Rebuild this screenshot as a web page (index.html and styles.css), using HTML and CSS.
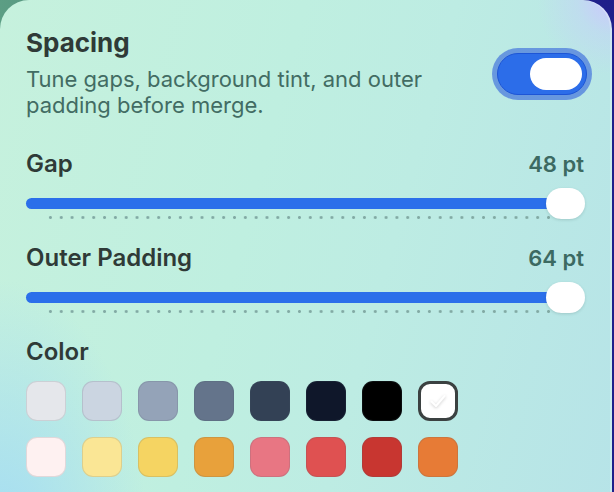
FILE: index.html
```html
<!DOCTYPE html>
<html lang="en">
<head>
<meta charset="utf-8">
<title>Spacing</title>
<link rel="stylesheet" href="styles.css">
</head>
<body>
<div class="panel">
  <header class="head">
    <div class="head-text">
      <h1 class="title">Spacing</h1>
      <p class="desc">Tune gaps, background tint, and outer padding before merge.</p>
    </div>
    <div class="toggle" role="switch" aria-checked="true"><span class="toggle-knob"></span></div>
  </header>

  <section class="field field-gap">
    <div class="field-row"><span class="label">Gap</span><span class="value">48 pt</span></div>
    <div class="slider">
      <div class="slider-track"></div>
      <div class="slider-dots"></div>
      <span class="slider-knob"></span>
    </div>
  </section>

  <section class="field">
    <div class="field-row"><span class="label">Outer Padding</span><span class="value">64 pt</span></div>
    <div class="slider">
      <div class="slider-track"></div>
      <div class="slider-dots"></div>
      <span class="slider-knob"></span>
    </div>
  </section>

  <section class="field">
    <div class="field-row"><span class="label">Color</span></div>
    <div class="swatches">
      <span class="sw c1"></span>
      <span class="sw c2"></span>
      <span class="sw c3"></span>
      <span class="sw c4"></span>
      <span class="sw c5"></span>
      <span class="sw c6"></span>
      <span class="sw c7"></span>
      <span class="sw c8 selected"><svg class="check" viewBox="0 0 24 24" width="24" height="24"><path d="M5.5 12.5l4.5 4.5 8.5-10" fill="none" stroke="#ffffff" stroke-width="2" stroke-linecap="round" stroke-linejoin="round"/></svg></span>
      <span class="sw d1"></span>
      <span class="sw d2"></span>
      <span class="sw d3"></span>
      <span class="sw d4"></span>
      <span class="sw d5"></span>
      <span class="sw d6"></span>
      <span class="sw d7"></span>
      <span class="sw d8"></span>
    </div>
  </section>
</div>
</body>
</html>
```
FILE: styles.css
```css
* { box-sizing: border-box; }
html, body { margin: 0; padding: 0; }
body {
  width: 614px;
  height: 492px;
  overflow: hidden;
  background: linear-gradient(90deg, #5c9e84 0%, #4f8a7c 20%, #22228b 80%, #1f1f8a 100%);
  font-family: "Inter", "Noto Sans", sans-serif;
}
.panel {
  width: 612px;
  min-height: 560px;
  border-radius: 29px 29px 0 0;
  padding: 27px 27px 0 26px;
  background:
    radial-gradient(circle at 100% 0%, rgba(205,198,255,0.95) 0px, rgba(200,200,255,0.35) 35px, rgba(190,230,235,0) 75px),
    radial-gradient(ellipse 150px 280px at 0% 100%, rgba(160,218,246,0.95), rgba(170,225,240,0) 100%),
    linear-gradient(105deg, #c6f1dd 0%, #bfefe0 40%, #bdece3 60%, #b6e3e8 100%);
  box-shadow: inset -2px 0 0 rgba(255,255,255,0.25);
}
.head {
  display: flex;
  align-items: center;
  justify-content: space-between;
}
.title {
  margin: 0;
  font-size: 26px;
  line-height: 32px;
  font-weight: 700;
  color: #2f3a37;
}
.desc {
  margin: 7px 0 0;
  width: 440px;
  font-size: 22px;
  line-height: 26px;
  font-weight: 400;
  color: #426c63;
}
.toggle {
  position: relative;
  width: 90px;
  height: 42px;
  margin-right: -2px;
  margin-top: 2px;
  border-radius: 21px;
  background: #2c6de9;
  border: 1px solid #1d55d6;
  box-shadow: 0 0 0 5px rgba(48,96,218,0.6);
}
.toggle-knob {
  position: absolute;
  right: 4px;
  top: 4px;
  width: 52px;
  height: 32px;
  border-radius: 16px;
  background: #ffffff;
}
.field { margin-top: 24px; }
.field-gap.field { margin-top: 32px; }
.field-row {
  display: flex;
  justify-content: space-between;
  align-items: baseline;
  height: 28px;
  line-height: 28px;
}
.label {
  font-size: 24px;
  font-weight: 600;
  color: #2f3a37;
}
.value {
  font-size: 22px;
  font-weight: 600;
  color: #3c6a62;
  margin-right: 1px;
}
.slider {
  position: relative;
  margin-top: 10px;
  height: 32px;
  padding-top: 10px;
}
.slider-track {
  height: 11px;
  border-radius: 6px;
  background: #2b6fea;
  margin-right: 10px;
}
.slider-dots {
  margin: 7px 20px 0 19px;
  height: 3px;
  background-image: radial-gradient(circle, #82aaa4 1.2px, rgba(130,170,164,0) 1.7px);
  background-size: 10.83px 3px;
  background-repeat: repeat-x;
}
.slider-knob {
  position: absolute;
  right: 0;
  top: 0;
  width: 39px;
  height: 31px;
  border-radius: 16px;
  background: #ffffff;
  box-shadow: 0 1px 3px rgba(40,70,70,0.18);
}
.swatches {
  margin-top: 15px;
  display: grid;
  grid-template-columns: repeat(8, 40px);
  gap: 16px;
}
.sw {
  width: 40px;
  height: 40px;
  border-radius: 11px;
  border: 1px solid rgba(70,90,100,0.16);
  display: flex;
  align-items: center;
  justify-content: center;
}
.c1 { background: #e5e7eb; }
.c2 { background: #cbd5e1; }
.c3 { background: #94a3b8; }
.c4 { background: #64748b; }
.c5 { background: #334155; }
.c6 { background: #0f172a; }
.c7 { background: #000000; }
.c8 { background: #ffffff; }
.selected { border: 3px solid #3b4141; border-radius: 12px; }
.check { filter: drop-shadow(0 1px 1.5px rgba(0,0,0,0.2)); }
.d1 { background: #fef1f1; }
.d2 { background: #fae695; }
.d3 { background: #f5d462; }
.d4 { background: #e8a13b; }
.d5 { background: #e87683; }
.d6 { background: #df5151; }
.d7 { background: #c83630; }
.d8 { background: #e77b36; }
```
